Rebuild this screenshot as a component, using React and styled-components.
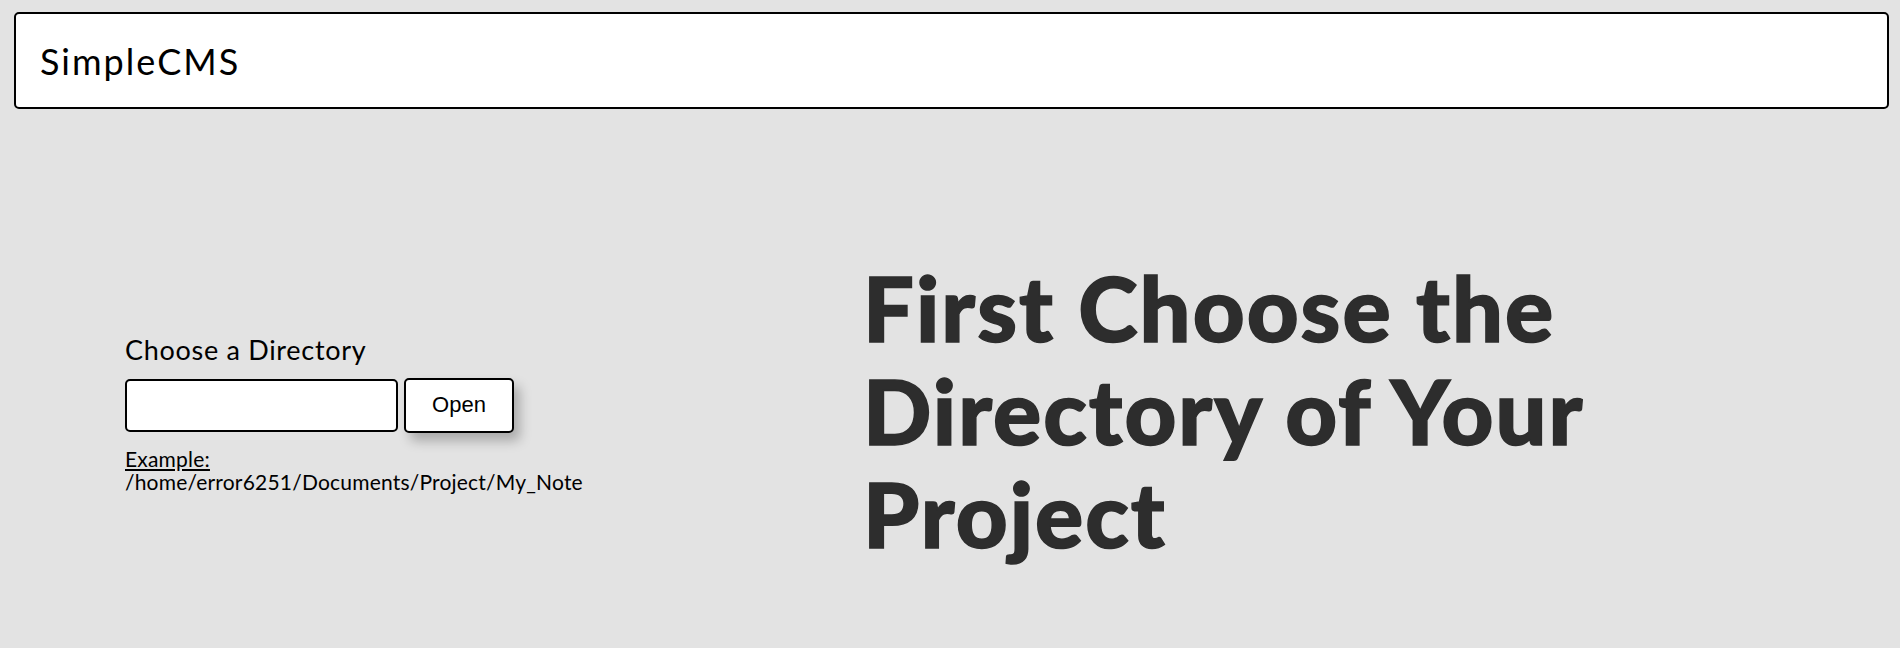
import styled, { createGlobalStyle } from "styled-components"

const GlobalStyle = createGlobalStyle`
body {
    margin: 0;
    background: #e3e3e3;
    font-family: Lato, "Open Sans", sans-serif;
    color: #000;
}
`

export default function App() {
    return <>
        <GlobalStyle />
        <Page>
            <Header>
                <Brand>SimpleCMS</Brand>
            </Header>
            <Main>
                <FormColumn>
                    <Label htmlFor="dir">Choose a Directory</Label>
                    <InputRow>
                        <DirInput id="dir" type="text" />
                        <OpenButton>Open</OpenButton>
                    </InputRow>
                    <Hint>
                        <u>Example:</u><br />
                        /home/error6251/Documents/Project/My_Note
                    </Hint>
                </FormColumn>
                <Title>First Choose the Directory of Your Project</Title>
            </Main>
        </Page>
    </>
}

const Page = styled.div`
padding: 12px 11px 0 14px;
`
const Header = styled.header`
display: flex;
align-items: center;
height: 97px;
box-sizing: border-box;
border: 2px solid #000;
border-radius: 5px;
background: #fff;
padding-left: 24px;
`
const Brand = styled.h1`
margin: 0;
font-weight: 400;
font-size: 36px;
letter-spacing: 2px;
`
const Main = styled.main`
display: flex;
align-items: center;
height: 539px;
box-sizing: border-box;
padding-top: 64px;
`
const FormColumn = styled.div`
display: flex;
flex-direction: column;
width: 849px;
box-sizing: border-box;
padding: 4px 0 0 111px;
`
const Label = styled.label`
font-size: 27px;
letter-spacing: 0.7px;
margin-bottom: 12px;
`
const InputRow = styled.div`
display: flex;
align-items: center;
gap: 6px;
`
const DirInput = styled.input`
width: 273px;
height: 53px;
box-sizing: border-box;
border: 2px solid #000;
border-radius: 5px;
background: #fff;
`
const OpenButton = styled.button`
width: 110px;
height: 55px;
box-sizing: border-box;
border: 2px solid #000;
border-radius: 5px;
background: #fff;
font-family: "Liberation Sans", Arial, sans-serif;
font-size: 22px;
box-shadow: 6px 8px 12px rgba(0, 0, 0, 0.25);
`
const Hint = styled.p`
margin: 14px 0 0;
font-size: 21px;
line-height: 23px;
letter-spacing: 0.2px;
`
const Title = styled.h2`
margin: 0;
width: 800px;
font-size: 90px;
line-height: 103px;
font-weight: 900;
letter-spacing: 2px;
color: #2d2d2d;
-webkit-text-stroke: 1.5px #2d2d2d;
`
